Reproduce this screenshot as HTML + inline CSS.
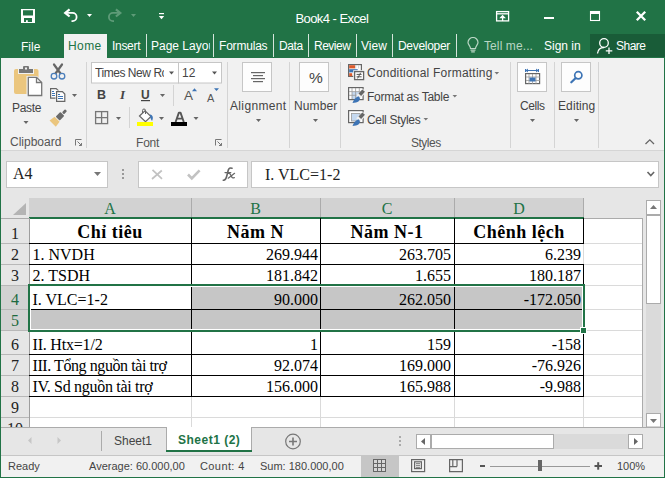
<!DOCTYPE html>
<html><head><meta charset="utf-8">
<style>
*{box-sizing:border-box;margin:0;padding:0}
html,body{width:665px;height:478px;overflow:hidden;background:#217346}
body{position:relative;font-family:"Liberation Sans",sans-serif;font-size:12px;color:#444}
.a{position:absolute}
.t{position:absolute;white-space:nowrap;line-height:12px;font-size:12px}
.w{color:#fff}
.sep{position:absolute;width:1px;background:#d4d4d4}
.tsep{position:absolute;width:1px;top:34px;height:23px;background:#d5e5db}
.arr{position:absolute;width:0;height:0;border-left:3px solid transparent;border-right:3px solid transparent;border-top:3px solid #555}
.serif{font-family:"Liberation Serif",serif}
.cell{position:absolute;white-space:nowrap;font-family:"Liberation Serif",serif;font-size:16px;line-height:16px;color:#000}
.rh{position:absolute;left:1px;width:28px;text-align:center;font-family:"Liberation Serif",serif;font-size:16px;line-height:16px;color:#222}
.box{position:absolute;background:#fdfdfd;border:1px solid #c6c6c6}
</style></head>
<body>
<!-- TITLE BAR -->
<svg class="a" style="left:0;top:0" width="665" height="34">
  <!-- save -->
  <path fill="#fff" fill-rule="evenodd" d="M21 9h14v14h-14z M23 10.2h10v5.2h-10z M24 17.9h8v4.2h-8z"/>
  <rect x="26" y="20.2" width="1.8" height="2" fill="#fff"/>
  <!-- undo -->
  <path d="M69.6 9.3 L65.2 12.9 L69.6 16.5" fill="none" stroke="#fff" stroke-width="2.2" stroke-linejoin="miter"/>
  <path d="M65.5 12.9 H72.5 A4.1 4.1 0 0 1 72.5 21.1 H71.5" fill="none" stroke="#fff" stroke-width="1.8"/>
  <path d="M87 14h5l-2.5 3z" fill="#fff"/>
  <!-- redo -->
  <path d="M115.9 9.3 L120.3 12.9 L115.9 16.5" fill="none" stroke="#5e9b78" stroke-width="2.2"/>
  <path d="M120 12.9 H113 A4.1 4.1 0 0 0 113 21.1 H114" fill="none" stroke="#5e9b78" stroke-width="1.8"/>
  <path d="M131 14h5l-2.5 3z" fill="#5e9b78"/>
  <!-- customize -->
  <rect x="159" y="13" width="5" height="1.2" fill="#fff"/>
  <path d="M158.8 16h5.4l-2.7 3.3z" fill="#fff"/>
  <!-- ribbon display -->
  <g fill="none" stroke="#fff" stroke-width="1.3">
    <rect x="496.6" y="11.6" width="12" height="9.3"/>
    <path d="M496.6 13.8h12"/>
    <path d="M502.6 21v-4"/>
  </g>
  <path d="M499.3 18.2 L502.6 14.8 L505.9 18.2z" fill="#fff"/>
  <!-- minimize -->
  <rect x="544" y="17" width="10" height="2" fill="#fff"/>
  <!-- maximize -->
  <rect x="590.5" y="11.5" width="9" height="9" fill="none" stroke="#fff" stroke-width="1.1"/>
  <rect x="590" y="11" width="10" height="3" fill="#fff"/>
  <!-- close -->
  <path d="M636.8 11.8l8.4 8.4M645.2 11.8l-8.4 8.4" stroke="#fff" stroke-width="2.3"/>
</svg>
<div class="t w" style="left:295.5px;top:12px;font-size:13px;line-height:13px;letter-spacing:-0.6px">Book4</div><div class="t w" style="left:332.5px;top:12px;font-size:13px;line-height:13px">-</div><div class="t w" style="left:339.5px;top:12px;font-size:13px;line-height:13px;letter-spacing:-0.6px">Excel</div>

<!-- TABS -->
<div class="t w" style="left:21px;top:41px">File</div>
<div class="a" style="left:64px;top:34px;width:43px;height:25px;background:#f1f1f1"></div>
<div class="t" style="left:68px;top:40px;color:#217346;letter-spacing:0.4px">Home</div>
<div class="t w" style="left:112px;top:40px;letter-spacing:-0.3px">Insert</div>
<div class="tsep" style="left:146px"></div>
<div class="a" style="left:151px;top:36px;width:59px;height:18px;overflow:hidden"><div class="t w" style="left:0;top:4px">Page Layout</div></div>
<div class="tsep" style="left:213px"></div>
<div class="t w" style="left:219px;top:40px;letter-spacing:-0.2px">Formulas</div>
<div class="tsep" style="left:273px"></div>
<div class="t w" style="left:279px;top:40px;letter-spacing:-0.4px">Data</div>
<div class="tsep" style="left:308px"></div>
<div class="t w" style="left:314px;top:40px;letter-spacing:-0.5px">Review</div>
<div class="tsep" style="left:356px"></div>
<div class="t w" style="left:361px;top:40px">View</div>
<div class="tsep" style="left:392px"></div>
<div class="t w" style="left:398px;top:40px;letter-spacing:-0.3px">Developer</div>
<div class="tsep" style="left:456px"></div>
<svg class="a" style="left:466px;top:37px" width="14" height="17">
  <path d="M4.5 11.5 C4.5 9 2 7.8 2 5.5 A5 5 0 0 1 12 5.5 C12 7.8 9.5 9 9.5 11.5z" fill="none" stroke="#b9d6c4" stroke-width="1.2"/>
  <path d="M4.5 13.2h5M5.2 14.8h3.6" stroke="#b9d6c4" stroke-width="1.2"/>
</svg>
<div class="t" style="left:484px;top:40px;color:#b9d6c4;letter-spacing:0.1px">Tell me...</div>
<div class="t w" style="left:544px;top:40px">Sign in</div>
<div class="a" style="left:590px;top:34px;width:75px;height:23px;background:#195c38"></div>
<svg class="a" style="left:596px;top:37px" width="18" height="18">
  <circle cx="8" cy="6" r="4.3" fill="none" stroke="#fff" stroke-width="1.3"/>
  <path d="M1.5 16.5 C2 12.5 4.5 10.5 8 10.5" fill="none" stroke="#fff" stroke-width="1.3"/>
  <path d="M13 10.5v6.5M9.8 13.8h6.5" stroke="#fff" stroke-width="1.3"/>
</svg>
<div class="t w" style="left:616px;top:40px;letter-spacing:-0.5px">Share</div>

<!-- RIBBON -->
<div class="a" style="left:1px;top:58px;width:663px;height:93px;background:#f1f1f1;border-bottom:1px solid #d5d5d5"></div>

<svg class="a" style="left:0;top:0" width="665" height="151">
  <!-- group separators -->
  <g fill="#d4d4d4">
    <rect x="86" y="62" width="1" height="86"/>
    <rect x="227" y="62" width="1" height="86"/>
    <rect x="289" y="62" width="1" height="86"/>
    <rect x="340" y="62" width="1" height="86"/>
    <rect x="510" y="62" width="1" height="86"/>
    <rect x="554" y="62" width="1" height="86"/>
    <rect x="598" y="62" width="1" height="86"/>
    <rect x="173" y="85" width="1" height="21"/>
    <rect x="129" y="107" width="1" height="21"/>
  </g>
  <!-- paste -->
  <rect x="14" y="69" width="24.5" height="25" rx="2" fill="#ebc67e"/>
  <path d="M18 68.5h16v5.5h-16z" fill="#f1f1f1"/>
  <path d="M19 69h14v4h-14z" fill="#777"/>
  <rect x="23" y="66" width="6" height="4" rx="1" fill="#777"/>
  <rect x="25" y="67.5" width="2" height="2" fill="#f1f1f1"/>
  <path d="M26.5 76h10.5l6 6v15h-16.5z" fill="#f1f1f1"/>
  <path d="M28.3 77.3h8.2l5.2 5.2v13h-13.4z" fill="#fff" stroke="#777" stroke-width="1.3"/>
  <path d="M36.5 77.3v5.2h5.2" fill="none" stroke="#777" stroke-width="1.3"/>
  <!-- scissors -->
  <path d="M54 64.5 L60.5 73.5 M62 64.5 L55.5 73.5" stroke="#666" stroke-width="2.2" stroke-linecap="round"/>
  <circle cx="54" cy="76.2" r="2.8" fill="#f1f1f1" stroke="#4a7ebb" stroke-width="1.3"/>
  <circle cx="62" cy="76.2" r="2.8" fill="#f1f1f1" stroke="#4a7ebb" stroke-width="1.3"/>
  <!-- copy -->
  <path d="M50.6 88.6h5.6l2 2v7.6h-7.6z" fill="#fff" stroke="#666" stroke-width="1.2"/>
  <g fill="#3d74b5"><rect x="52" y="91" width="2" height="1"/><rect x="52" y="93" width="3" height="1"/><rect x="52" y="95" width="3" height="1"/></g>
  <path d="M55.5 90.5h7l3 3v9h-10z" fill="#f1f1f1"/>
  <path d="M56.6 91.6h5.8l2.4 2.4v7.4h-8.2z" fill="#fff" stroke="#666" stroke-width="1.2"/>
  <g fill="#3d74b5"><rect x="58" y="94" width="2" height="1"/><rect x="58" y="96" width="5" height="1"/><rect x="58" y="98" width="5" height="1"/></g>
  <path d="M72 94h5l-2.5 3z" fill="#666"/>
  <!-- format painter -->
  <g transform="translate(58.3,118) rotate(-45) scale(0.88)">
    <rect x="-1" y="-3.2" width="7.5" height="6.4" rx="1" fill="#6a6a6a"/>
    <rect x="7.5" y="-1.6" width="5" height="3.2" rx="1" fill="#6a6a6a"/>
    <path d="M-2 -4 L-2 4 L-9 5 L-9 -5z" fill="#ebc67e"/>
  </g>
  <path d="M23.5 121h5l-2.5 3z" fill="#666"/>
  <!-- dialog launchers -->
  <g fill="none" stroke="#777" stroke-width="1">
    <path d="M75.5 145.5v-6h6M77.5 141.5l4 4M79 145.5h2.5v-2.5"/>
    <path d="M215.5 145.5v-6h6M217.5 141.5l4 4M219 145.5h2.5v-2.5"/>
  </g>
  <!-- font combos -->
  <rect x="91.5" y="62.5" width="87" height="20.5" fill="#fff" stroke="#c6c6c6"/>
  <rect x="178.5" y="62.5" width="43" height="20.5" fill="#fff" stroke="#c6c6c6"/>
  <path d="M169 71.5h5l-2.5 3z" fill="#555"/>
  <path d="M212 71.5h5l-2.5 3z" fill="#555"/>
  <!-- underline / arrows -->
  <rect x="141" y="100" width="9" height="1.2" fill="#444"/>
  <path d="M160 94h5l-2.5 3z" fill="#666"/>
  <path d="M192 88.2l2.5 -3 2.5 3z" fill="#3d74b5" transform="translate(0,3)"/>
  <path d="M214 88.2h5l-2.5 2.8z" fill="#3d74b5"/>
  <!-- borders icon -->
  <g fill="none" stroke="#777" stroke-width="1.3">
    <rect x="95.6" y="111.6" width="12" height="12"/>
    <path d="M101.6 111.6v12M95.6 117.6h12"/>
  </g>
  <path d="M116 117h5l-2.5 3z" fill="#666"/>
  <!-- fill color -->
  <path d="M139.5 116 L145 110.8 L151 116.5 L145.5 121.6z" fill="#fff" stroke="#666" stroke-width="1.2"/>
  <path d="M142.5 113 v-2.5 a1.5 1.5 0 0 1 3 0 v3.5" fill="none" stroke="#666" stroke-width="1"/>
  <path d="M150 114.5 C153 115 153.5 118 152 121 C150.5 119 150 117 150 114.5z" fill="#3d74b5"/>
  <rect x="137" y="122" width="16" height="4" fill="#ffff00"/>
  <path d="M159 117h5l-2.5 3z" fill="#666"/>
  <!-- font color -->
  <path d="M175.6 122 L178.9 112.6 H180.5 L183.8 122 M177.2 118.6h5" fill="none" stroke="#555" stroke-width="1.9" stroke-linejoin="bevel"/>
  <rect x="171" y="122" width="16" height="4" fill="#000"/>
  <path d="M193.5 117h5l-2.5 3z" fill="#666"/>
  <!-- alignment/number boxes -->
  <rect x="242.5" y="62.5" width="29" height="29" fill="#fdfdfd" stroke="#c6c6c6"/>
  <g fill="#666"><rect x="251" y="72" width="14" height="1.2"/><rect x="253" y="75" width="10" height="1.2"/><rect x="251" y="78" width="14" height="1.2"/><rect x="253" y="81" width="10" height="1.2"/></g>
  <rect x="299.5" y="62.5" width="29" height="29" fill="#fdfdfd" stroke="#c6c6c6"/>
  <path d="M256 119h5l-2.5 3z" fill="#666"/>
  <path d="M313 119h5l-2.5 3z" fill="#666"/>
  <!-- conditional formatting icon -->
  <rect x="348.6" y="64.6" width="12.8" height="11.8" fill="#fff" stroke="#666" stroke-width="1.2"/>
  <rect x="349.2" y="65.2" width="6" height="3.2" fill="#dc5a2c"/>
  <rect x="349.2" y="69.2" width="8.5" height="3.2" fill="#3a73b5"/>
  <rect x="349.2" y="73.2" width="3" height="3" fill="#dc5a2c"/>
  <path d="M355.8 65.2v3.3M358.6 65.2v3.3" stroke="#ccc" stroke-width="0.8"/>
  <rect x="353.2" y="70.2" width="12" height="10.6" fill="#f1f1f1"/>
  <rect x="354.6" y="71.6" width="9" height="8" fill="#fff" stroke="#666" stroke-width="1.3"/>
  <path d="M356.6 74.4h5M356.6 76.8h5" stroke="#555" stroke-width="1"/>
  <path d="M360.6 72.8 L357.6 78.4" stroke="#555" stroke-width="1"/>
  <path d="M494.5 72h4.6l-2.3 2.5z" fill="#777"/>
  <!-- format as table icon -->
  <rect x="348.6" y="87.6" width="14.5" height="12" fill="#fff" stroke="#666" stroke-width="1.2"/>
  <rect x="352" y="92" width="7" height="7" fill="#c5d9f0"/>
  <path d="M352 88v11M355.6 88v11M359.3 88v11M349 91.6h14M349 95.3h14" stroke="#999" stroke-width="0.8"/>
  <path d="M364.5 90.5 L358 97" stroke="#f1f1f1" stroke-width="5"/>
  <path d="M363.6 90.6 L359.8 94.8" stroke="#666" stroke-width="3.6" stroke-linecap="butt"/>
  <path d="M358.5 96.2 C361 98 360 101.5 356 102.5 L352.5 103 C353.5 100 355 97.5 358.5 96.2z" fill="#3d74b5"/>
  <path d="M452.5 95h4.6l-2.3 2.5z" fill="#777"/>
  <!-- cell styles icon -->
  <rect x="348.6" y="110.6" width="14.5" height="12" fill="#fff" stroke="#666" stroke-width="1.2"/>
  <rect x="351.5" y="113.5" width="8.5" height="7.5" fill="#c5d9f0" stroke="#999" stroke-width="0.8"/>
  <path d="M364.5 113.5 L358 120" stroke="#f1f1f1" stroke-width="5"/>
  <path d="M363.6 113.6 L359.8 117.8" stroke="#666" stroke-width="3.6" stroke-linecap="butt"/>
  <path d="M358.5 119.2 C361 121 360 124.5 356 125.5 L352.5 126 C353.5 123 355 120.5 358.5 119.2z" fill="#3d74b5"/>
  <path d="M423.5 118h4.6l-2.3 2.5z" fill="#777"/>
  <!-- cells -->
  <rect x="517.5" y="62.5" width="29" height="29" fill="#fdfdfd" stroke="#c6c6c6"/>
  <path d="M525.5 69v3M538.5 69v3M526 70.5h12M526 70.5l2 -1.5M526 70.5l2 1.5M538 70.5l-2 -1.5M538 70.5l-2 1.5" stroke="#3d74b5" stroke-width="1"/>
  <rect x="525.6" y="73.6" width="14" height="10" fill="#fff" stroke="#666" stroke-width="1.2"/>
  <path d="M529 74v10M532.5 74v10M536 74v10M526 77h14M526 80.5h14" stroke="#999" stroke-width="0.8"/>
  <rect x="529.5" y="77.5" width="6" height="4" fill="#3d74b5"/>
  <path d="M530 119h5l-2.5 3z" fill="#666"/>
  <!-- editing -->
  <rect x="561.5" y="62.5" width="29" height="29" fill="#fdfdfd" stroke="#c6c6c6"/>
  <circle cx="578.3" cy="75.3" r="3.6" fill="none" stroke="#3d74b5" stroke-width="1.7"/>
  <path d="M575.5 78.2 L571.3 82.3" stroke="#3d74b5" stroke-width="2.2" stroke-linecap="round"/>
  <path d="M574 119h5l-2.5 3z" fill="#666"/>
  <!-- collapse -->
  <path d="M645.5 144 L649.8 139.8 L654 144" fill="none" stroke="#666" stroke-width="1.3"/>
</svg>
<div class="t" style="left:12px;top:102px;color:#444;letter-spacing:-0.3px">Paste</div>
<div class="t" style="left:10px;top:136px;color:#555">Clipboard</div>
<div class="a" style="left:95px;top:66px;width:69px;height:16px;overflow:hidden"><div class="t" style="left:0;top:1px;color:#444;letter-spacing:-0.45px">Times New Roman</div></div>
<div class="t" style="left:182px;top:67px;color:#444">12</div>
<div class="t" style="left:97px;top:89px;color:#444;font-weight:bold;font-size:12.5px">B</div>
<div class="t serif" style="left:120px;top:89px;color:#444;font-style:italic;font-weight:bold;font-size:13px">I</div>
<div class="t" style="left:141px;top:89px;color:#444;font-weight:bold;font-size:12px">U</div>
<div class="t" style="left:184px;top:90px;color:#555;font-size:13.5px">A</div>
<div class="t" style="left:207px;top:92px;color:#555;font-size:11px">A</div>
<div class="t" style="left:136px;top:137px;color:#555;letter-spacing:-0.2px">Font</div>
<div class="t" style="left:230px;top:100px;color:#444;letter-spacing:0.35px">Alignment</div>
<div class="t" style="left:309px;top:70px;color:#444;font-size:15.5px;line-height:15px">%</div>
<div class="t" style="left:294px;top:100px;color:#444;letter-spacing:0.1px">Number</div>
<div class="t" style="left:367px;top:67px;color:#444;letter-spacing:0.22px">Conditional Formatting</div>
<div class="t" style="left:367px;top:91px;color:#444;letter-spacing:-0.25px">Format as Table</div>
<div class="t" style="left:367px;top:114px;color:#444;letter-spacing:-0.3px">Cell Styles</div>
<div class="t" style="left:411px;top:137px;color:#555;letter-spacing:-0.5px">Styles</div>
<div class="t" style="left:520px;top:100px;color:#444;letter-spacing:-0.4px">Cells</div>
<div class="t" style="left:558px;top:100px;color:#444;letter-spacing:0.1px">Editing</div>
<svg class="a" style="left:0;top:0" width="665" height="478"><rect x="1" y="151" width="663" height="326" fill="#e6e6e6"/><rect x="6.5" y="161.5" width="101" height="26" fill="#fff" stroke="#c6c6c6"/><path d="M94 172h7l-3.5 4z" fill="#777"/><g fill="#999"><rect x="122" y="169" width="2" height="2"/><rect x="122" y="173" width="2" height="2"/><rect x="122" y="177" width="2" height="2"/></g><rect x="138.5" y="161.5" width="109" height="26" fill="#fff" stroke="#c6c6c6"/><path d="M152.5 169.8l9.5 9M161.8 170.5l-9.8 8.5" stroke="#c2c2c2" stroke-width="1.7"/><path d="M188 174.5l3.8 3.8 7.8-8" fill="none" stroke="#c2c2c2" stroke-width="2.6"/><rect x="251.5" y="161.5" width="407" height="26" fill="#fff" stroke="#c6c6c6"/><path d="M647.5 172l3.3 3.5 3.3-3.5" fill="none" stroke="#666" stroke-width="1.6"/><rect x="1" y="198" width="28" height="20" fill="#e6e6e6"/><path d="M13 215h13v-12z" fill="#b4b4b4"/><rect x="29" y="198" width="555" height="20" fill="#d2d2d2"/><rect x="191" y="198" width="1" height="19" fill="#ababab"/><rect x="320" y="198" width="1" height="19" fill="#ababab"/><rect x="454" y="198" width="1" height="19" fill="#ababab"/><rect x="583" y="198" width="1" height="19" fill="#ababab"/><rect x="29" y="217" width="555" height="2" fill="#217346"/><rect x="1" y="218" width="28" height="1" fill="#ababab"/><rect x="1" y="219" width="28" height="208" fill="#e6e6e6"/><rect x="1" y="285" width="28" height="45" fill="#d2d2d2"/><rect x="1" y="243" width="28" height="1" fill="#b8b8b8"/><rect x="1" y="264" width="28" height="1" fill="#b8b8b8"/><rect x="1" y="285" width="28" height="1" fill="#b8b8b8"/><rect x="1" y="309" width="28" height="1" fill="#b8b8b8"/><rect x="1" y="330" width="28" height="1" fill="#b8b8b8"/><rect x="1" y="354" width="28" height="1" fill="#b8b8b8"/><rect x="1" y="375" width="28" height="1" fill="#b8b8b8"/><rect x="1" y="396" width="28" height="1" fill="#b8b8b8"/><rect x="1" y="417" width="28" height="1" fill="#b8b8b8"/><rect x="29" y="218" width="1" height="209" fill="#9e9e9e"/><rect x="30" y="219" width="612" height="208" fill="#fff"/><rect x="584" y="243" width="58" height="1" fill="#dadada"/><rect x="584" y="264" width="58" height="1" fill="#dadada"/><rect x="584" y="285" width="58" height="1" fill="#dadada"/><rect x="584" y="309" width="58" height="1" fill="#dadada"/><rect x="584" y="330" width="58" height="1" fill="#dadada"/><rect x="584" y="354" width="58" height="1" fill="#dadada"/><rect x="584" y="375" width="58" height="1" fill="#dadada"/><rect x="584" y="396" width="58" height="1" fill="#dadada"/><rect x="584" y="417" width="58" height="1" fill="#dadada"/><rect x="584" y="218" width="59" height="1" fill="#ababab"/><rect x="642" y="218" width="1" height="209" fill="#ababab"/><rect x="191" y="396" width="1" height="31" fill="#dadada"/><rect x="320" y="396" width="1" height="31" fill="#dadada"/><rect x="454" y="396" width="1" height="31" fill="#dadada"/><rect x="583" y="396" width="1" height="31" fill="#dadada"/><rect x="30" y="417" width="553" height="1" fill="#dadada"/><rect x="30" y="286" width="554" height="44" fill="#c6c6c6"/><rect x="30" y="286" width="161" height="23" fill="#fff"/><rect x="29" y="243" width="555" height="1" fill="#000"/><rect x="29" y="264" width="555" height="1" fill="#000"/><rect x="29" y="285" width="555" height="1" fill="#000"/><rect x="29" y="309" width="555" height="1" fill="#000"/><rect x="29" y="330" width="555" height="1" fill="#000"/><rect x="29" y="354" width="555" height="1" fill="#000"/><rect x="29" y="375" width="555" height="1" fill="#000"/><rect x="29" y="396" width="555" height="1" fill="#000"/><rect x="191" y="218" width="1" height="179" fill="#000"/><rect x="320" y="218" width="1" height="179" fill="#000"/><rect x="454" y="218" width="1" height="179" fill="#000"/><rect x="583" y="218" width="1" height="26" fill="#000"/><rect x="583" y="244" width="1" height="20" fill="#dadada"/><rect x="583" y="264" width="1" height="133" fill="#000"/><rect x="30.5" y="286.5" width="552" height="43" fill="none" stroke="#fff" stroke-width="1"/><rect x="29" y="285" width="555" height="46" fill="none" stroke="#217346" stroke-width="2"/><rect x="580.5" y="327.5" width="6" height="6" fill="#217346" stroke="#fff" stroke-width="1"/><rect x="646" y="215" width="15" height="198" fill="#dadada"/><rect x="646.5" y="200.5" width="14" height="14" fill="#fff" stroke="#ababab"/><path d="M650 209h7l-3.5-4z" fill="#777"/><rect x="646.5" y="215.5" width="14" height="88" fill="#fff" stroke="#ababab"/><rect x="646.5" y="413.5" width="14" height="13.5" fill="#fff" stroke="#ababab"/><path d="M650 419h7l-3.5 4z" fill="#777"/><rect x="1" y="427" width="165" height="1" fill="#ababab"/><rect x="252" y="427" width="412" height="1" fill="#ababab"/><path d="M31.5 437v7l-3.5-3.5z" fill="#c6c6c6"/><path d="M57.5 437v7l3.5-3.5z" fill="#c6c6c6"/><rect x="101" y="431" width="1" height="20" fill="#ababab"/><rect x="166" y="427" width="1" height="24" fill="#ababab"/><rect x="167" y="427" width="84" height="23" fill="#fff"/><rect x="251" y="427" width="1" height="24" fill="#ababab"/><rect x="166" y="450" width="86" height="2" fill="#217346"/><circle cx="293" cy="441.5" r="7.3" fill="none" stroke="#777" stroke-width="1.2"/><path d="M293 437.5v8M289 441.5h8" stroke="#777" stroke-width="1.6"/><g fill="#aaa"><rect x="399" y="436" width="2" height="2"/><rect x="399" y="440" width="2" height="2"/><rect x="399" y="444" width="2" height="2"/></g><rect x="416" y="434" width="212" height="15" fill="#dadada"/><rect x="416.5" y="434.5" width="14" height="14" fill="#fff" stroke="#ababab"/><path d="M425 438v7l-4-3.5z" fill="#666"/><rect x="431.5" y="434.5" width="122" height="14" fill="#fff" stroke="#ababab"/><rect x="628.5" y="434.5" width="14" height="14" fill="#fff" stroke="#ababab"/><path d="M634 438v7l4-3.5z" fill="#666"/><rect x="1" y="455" width="663" height="1" fill="#c6c6c6"/><rect x="1" y="456" width="663" height="21" fill="#f1f1f1"/><rect x="361" y="456" width="38" height="21" fill="#c6c6c6"/><rect x="373" y="459" width="13" height="13" fill="#666"/><rect x="374" y="460" width="3" height="3" fill="#d6d6d6"/><rect x="374" y="464" width="3" height="3" fill="#d6d6d6"/><rect x="374" y="468" width="3" height="3" fill="#d6d6d6"/><rect x="378" y="460" width="3" height="3" fill="#d6d6d6"/><rect x="378" y="464" width="3" height="3" fill="#d6d6d6"/><rect x="378" y="468" width="3" height="3" fill="#d6d6d6"/><rect x="382" y="460" width="3" height="3" fill="#d6d6d6"/><rect x="382" y="464" width="3" height="3" fill="#d6d6d6"/><rect x="382" y="468" width="3" height="3" fill="#d6d6d6"/><rect x="411.6" y="459.6" width="13" height="12" fill="none" stroke="#666" stroke-width="1.2"/><rect x="414.6" y="461.8" width="6.8" height="6.8" fill="none" stroke="#666" stroke-width="1.2"/><path d="M416 463.7h4M416 465.7h4M416 467.7h4" stroke="#666" stroke-width="0.9"/><path d="M449.6 459.6h12.8v12h-12.8z M452.8 459.6v7 M457 459.6v7 M449.6 466.6h7.4" fill="none" stroke="#666" stroke-width="1.2"/><rect x="480" y="465" width="5" height="2" fill="#555"/><rect x="490" y="466" width="100" height="1" fill="#999"/><rect x="538" y="460" width="4" height="11" fill="#666"/><rect x="594.5" y="465" width="7.5" height="2" fill="#555"/><rect x="597.2" y="462.2" width="2" height="7.5" fill="#555"/></svg>
<div class="a serif" style="left:13px;top:166px;font-size:16px;line-height:16px;color:#222">A4</div>
<svg class="a" style="left:0;top:0" width="250" height="190"><g fill="none" stroke="#666" stroke-linecap="round">
<path d="M223.2 180.2 C225.2 180.5 226.2 178.8 226.9 175.5 L228.3 170 C228.8 168.2 230 167.6 232 168.2" stroke-width="1.6"/>
<path d="M225 172.6 H230.8" stroke-width="1.2"/>
<path d="M228.6 173.4 C230.2 173.2 230.7 174.4 231.4 176.2 C232 177.8 232.8 178.3 234.3 177.6" stroke-width="1.3"/>
<path d="M234.6 173.3 L228.2 178.2" stroke-width="1.2"/>
</g></svg>
<div class="a serif" style="left:265px;top:167px;font-size:16px;line-height:16px;color:#222">I. VLC=1-2</div>
<div class="a serif" style="left:29px;width:162px;top:201px;text-align:center;font-size:16px;line-height:16px;color:#217346">A</div>
<div class="a serif" style="left:191px;width:129px;top:201px;text-align:center;font-size:16px;line-height:16px;color:#217346">B</div>
<div class="a serif" style="left:320px;width:134px;top:201px;text-align:center;font-size:16px;line-height:16px;color:#217346">C</div>
<div class="a serif" style="left:454px;width:130px;top:201px;text-align:center;font-size:16px;line-height:16px;color:#217346">D</div>
<div class="a" style="left:0;top:0;width:643px;height:427px;overflow:hidden">
<div class="rh" style="top:226px;color:#222">1</div>
<div class="rh" style="top:247px;color:#222">2</div>
<div class="rh" style="top:268px;color:#222">3</div>
<div class="rh" style="top:292px;color:#1d6a40">4</div>
<div class="rh" style="top:313px;color:#1d6a40">5</div>
<div class="rh" style="top:337px;color:#222">6</div>
<div class="rh" style="top:358px;color:#222">7</div>
<div class="rh" style="top:379px;color:#222">8</div>
<div class="rh" style="top:400px;color:#222">9</div>
<div class="rh" style="top:421px;color:#222">10</div>
<div class="cell" style="left:29px;width:162px;text-align:center;top:223px;font-weight:bold;font-size:18px;line-height:18px;letter-spacing:0.5px">Chỉ tiêu</div>
<div class="cell" style="left:191px;width:129px;text-align:center;top:223px;font-weight:bold;font-size:18px;line-height:18px;letter-spacing:0.5px">Năm N</div>
<div class="cell" style="left:320px;width:134px;text-align:center;top:223px;font-weight:bold;font-size:18px;line-height:18px;letter-spacing:0.5px">Năm N-1</div>
<div class="cell" style="left:454px;width:130px;text-align:center;top:223px;font-weight:bold;font-size:18px;line-height:18px;letter-spacing:0.5px">Chênh lệch</div>
<div class="cell" style="left:32.5px;top:247px">1. NVDH</div>
<div class="cell" style="left:191px;width:127px;text-align:right;top:247px">269.944</div>
<div class="cell" style="left:320px;width:131px;text-align:right;top:247px">263.705</div>
<div class="cell" style="left:454px;width:127px;text-align:right;top:247px">6.239</div>
<div class="cell" style="left:32.5px;top:268px">2. TSDH</div>
<div class="cell" style="left:191px;width:127px;text-align:right;top:268px">181.842</div>
<div class="cell" style="left:320px;width:131px;text-align:right;top:268px">1.655</div>
<div class="cell" style="left:454px;width:127px;text-align:right;top:268px">180.187</div>
<div class="cell" style="left:32.5px;top:292px">I. VLC=1-2</div>
<div class="cell" style="left:191px;width:127px;text-align:right;top:292px">90.000</div>
<div class="cell" style="left:320px;width:131px;text-align:right;top:292px">262.050</div>
<div class="cell" style="left:454px;width:127px;text-align:right;top:292px">-172.050</div>
<div class="cell" style="left:32.5px;top:337px;letter-spacing:-0.2px">II. Htx=1/2</div>
<div class="cell" style="left:191px;width:127px;text-align:right;top:337px">1</div>
<div class="cell" style="left:320px;width:131px;text-align:right;top:337px">159</div>
<div class="cell" style="left:454px;width:127px;text-align:right;top:337px">-158</div>
<div class="cell" style="left:32.5px;top:358px;letter-spacing:-0.42px">III. Tổng nguồn tài trợ</div>
<div class="cell" style="left:191px;width:127px;text-align:right;top:358px">92.074</div>
<div class="cell" style="left:320px;width:131px;text-align:right;top:358px">169.000</div>
<div class="cell" style="left:454px;width:127px;text-align:right;top:358px">-76.926</div>
<div class="cell" style="left:32.5px;top:379px;letter-spacing:-0.3px">IV. Sd nguồn tài trợ</div>
<div class="cell" style="left:191px;width:127px;text-align:right;top:379px">156.000</div>
<div class="cell" style="left:320px;width:131px;text-align:right;top:379px">165.988</div>
<div class="cell" style="left:454px;width:127px;text-align:right;top:379px">-9.988</div>

</div>
<div class="t" style="left:114px;top:435px;color:#444">Sheet1</div>
<div class="t" style="left:178px;top:434px;color:#217346;font-weight:bold;letter-spacing:0.5px">Sheet1 (2)</div>
<div class="t" style="left:8px;top:461px;font-size:11px;line-height:11px;color:#444">Ready</div>
<div class="t" style="left:89px;top:461px;font-size:11px;line-height:11px;color:#444">Average: 60.000,00</div>
<div class="t" style="left:200px;top:461px;font-size:11px;line-height:11px;color:#444;letter-spacing:0.4px">Count: 4</div>
<div class="t" style="left:260px;top:461px;font-size:11px;line-height:11px;color:#444">Sum: 180.000,00</div>
<div class="t" style="left:617px;top:461px;font-size:11px;line-height:11px;color:#444">100%</div>
</body></html>
